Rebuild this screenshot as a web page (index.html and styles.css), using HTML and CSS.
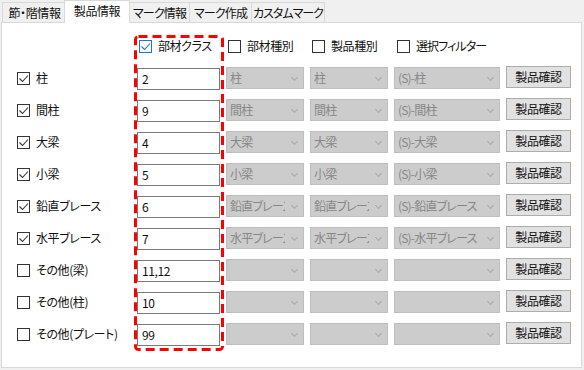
FILE: index.html
```html
<!doctype html>
<html lang="ja">
<head>
<meta charset="utf-8" />
<title>製品情報</title>
<link rel="stylesheet" href="styles.css">
</head>

<body>

<div id="tabs">
<div class="tab t1">節・階情報</div>
<div class="tab t2 sel">製品情報</div>
<div class="tab t3">マーク情報</div>
<div class="tab t4">マーク作成</div>
<div class="tab t5">カスタムマーク</div>
</div>

<div id="panel">
<div class="grid">

<div></div>
<div class="hd"><span class="cb blue"><svg width="11" height="11" viewBox="0 0 11 11"><path d="M1.5 5.5l3 3 5.5-6"/></svg></span>部材クラス</div>
<div class="hd"><span class="cb"></span>部材種別</div>
<div class="hd"><span class="cb"></span>製品種別</div>
<div class="hd last"><span class="cb"></span>選択フィルター</div>
<div></div>

<div class="lbl"><span class="cb"><svg width="11" height="11" viewBox="0 0 11 11"><path d="M1.5 5.5l3 3 5.5-6"/></svg></span>柱</div>
<div class="num">2</div>
<div class="combo"><span>柱</span></div>
<div class="combo"><span>柱</span></div>
<div class="combo"><span>(S)-柱</span></div>
<div class="btn">製品確認</div>

<div class="lbl"><span class="cb"><svg width="11" height="11" viewBox="0 0 11 11"><path d="M1.5 5.5l3 3 5.5-6"/></svg></span>間柱</div>
<div class="num">9</div>
<div class="combo"><span>間柱</span></div>
<div class="combo"><span>間柱</span></div>
<div class="combo"><span>(S)-間柱</span></div>
<div class="btn">製品確認</div>

<div class="lbl"><span class="cb"><svg width="11" height="11" viewBox="0 0 11 11"><path d="M1.5 5.5l3 3 5.5-6"/></svg></span>大梁</div>
<div class="num">4</div>
<div class="combo"><span>大梁</span></div>
<div class="combo"><span>大梁</span></div>
<div class="combo"><span>(S)-大梁</span></div>
<div class="btn">製品確認</div>

<div class="lbl"><span class="cb"><svg width="11" height="11" viewBox="0 0 11 11"><path d="M1.5 5.5l3 3 5.5-6"/></svg></span>小梁</div>
<div class="num">5</div>
<div class="combo"><span>小梁</span></div>
<div class="combo"><span>小梁</span></div>
<div class="combo"><span>(S)-小梁</span></div>
<div class="btn">製品確認</div>

<div class="lbl"><span class="cb"><svg width="11" height="11" viewBox="0 0 11 11"><path d="M1.5 5.5l3 3 5.5-6"/></svg></span>鉛直ブレース</div>
<div class="num">6</div>
<div class="combo"><span>鉛直ブレース</span></div>
<div class="combo"><span>鉛直ブレース</span></div>
<div class="combo"><span>(S)-鉛直ブレース</span></div>
<div class="btn">製品確認</div>

<div class="lbl"><span class="cb"><svg width="11" height="11" viewBox="0 0 11 11"><path d="M1.5 5.5l3 3 5.5-6"/></svg></span>水平ブレース</div>
<div class="num">7</div>
<div class="combo"><span>水平ブレース</span></div>
<div class="combo"><span>水平ブレース</span></div>
<div class="combo"><span>(S)-水平ブレース</span></div>
<div class="btn">製品確認</div>

<div class="lbl"><span class="cb"></span>その他(梁)</div>
<div class="num">11,12</div>
<div class="combo"><span></span></div>
<div class="combo"><span></span></div>
<div class="combo"><span></span></div>
<div class="btn">製品確認</div>

<div class="lbl"><span class="cb"></span>その他(柱)</div>
<div class="num">10</div>
<div class="combo"><span></span></div>
<div class="combo"><span></span></div>
<div class="combo"><span></span></div>
<div class="btn">製品確認</div>

<div class="lbl"><span class="cb"></span>その他(プレート)</div>
<div class="num">99</div>
<div class="combo"><span></span></div>
<div class="combo"><span></span></div>
<div class="combo"><span></span></div>
<div class="btn">製品確認</div>

</div>
</div>

<!-- red marking round the 部材クラス column -->
<svg class="mark" width="92" height="320" viewBox="0 0 92 320"><rect x="2.5" y="2.5" width="87" height="313" rx="3" /></svg>

</body>
</html>
```

FILE: styles.css
```css
body{margin:0;background:#f0f0f0;font-family:"Noto Sans CJK JP",sans-serif;font-size:12px;color:#111;font-feature-settings:"palt";letter-spacing:-0.4px;position:relative;width:584px;height:370px;overflow:hidden}

#tabs{display:flex;align-items:flex-end;height:22px;padding-left:2px}
.tab{height:20px;line-height:19px;border:1px solid #d9d9d9;border-bottom:0;margin-right:-1px;background:#f0f0f0;box-sizing:border-box;white-space:nowrap;text-align:center;overflow:hidden}
.t1{width:65px}
.t2{width:66px}
.t3{width:61px}
.t4{width:63px}
.t5{width:74px;letter-spacing:-1px}
.t3,.t4{letter-spacing:-0.8px}
.tab.sel{height:23px;line-height:20px;margin:0 -1px -1px -2px;background:#fff;position:relative;z-index:1}

#panel{margin-left:1px;width:581px;height:346px;box-sizing:border-box;border:1px solid #d9d9d9;background:#fff;padding:12px 0 0 15px}

.grid{display:grid;grid-template-columns:114px 83px 78px 78px 106px 65px;grid-auto-rows:22px;gap:10px 6px}

.hd{display:flex;align-items:center;gap:6px;margin-left:2px;line-height:16px}
.hd.last{margin-left:3px;letter-spacing:-0.9px}
.lbl{display:flex;align-items:center;gap:6px;line-height:16px;white-space:nowrap}

.cb{width:13px;height:13px;box-sizing:border-box;border:1px solid #333;background:#fff;flex:none;display:block}
.cb svg{display:block}
.cb path{fill:none;stroke:#333;stroke-width:1.1}
.cb.blue{border-color:#1c74d0}
.cb.blue path{stroke:#1c74d0}

.num{border:1px solid #7a7a7a;background:#fff;padding:0 4px;line-height:20px;box-sizing:border-box;margin-top:1px;height:22px}

.combo{background:#ccc;border:1px solid #bdbdbd;color:#878787;position:relative;padding:0 18px 0 3px;line-height:20px;box-sizing:border-box}
.combo span{display:block;overflow:hidden;white-space:nowrap;height:20px;letter-spacing:-0.8px}
.combo::after{content:"";position:absolute;right:6px;top:7px;width:4px;height:4px;border-right:1px solid #a9a9a9;border-bottom:1px solid #a9a9a9;transform:rotate(45deg)}

.btn{background:#e1e1e1;border:1px solid #adadad;text-align:center;line-height:20px;box-sizing:border-box;margin-top:-1px;height:22px}

.mark{position:absolute;left:133px;top:34px}
.mark rect{fill:none;stroke:#f00;stroke-width:3;stroke-dasharray:9 5}
```
